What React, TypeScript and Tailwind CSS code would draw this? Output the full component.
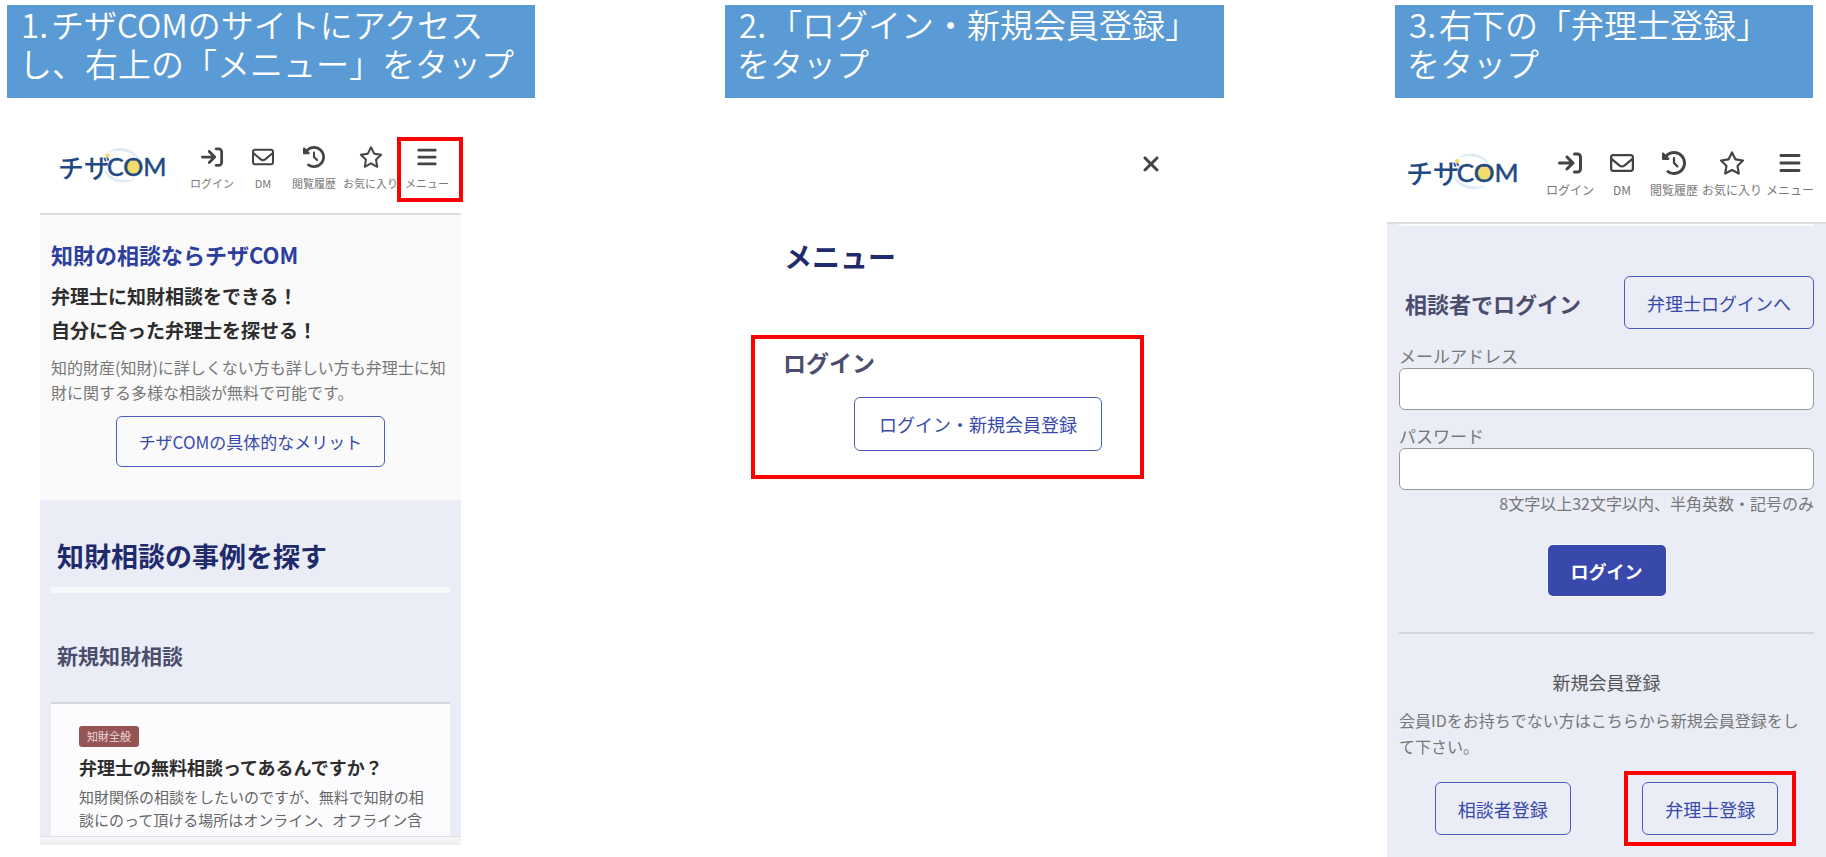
import React from "react";
import {
  FaArrowRightToBracket,
  FaBars,
  FaClockRotateLeft,
  FaRegEnvelope,
  FaRegStar,
  FaXmark,
} from "react-icons/fa6";

const navItems = [
  { title: "ログイン", icon: FaArrowRightToBracket },
  { title: "DM", icon: FaRegEnvelope },
  { title: "閲覧履歴", icon: FaClockRotateLeft },
  { title: "お気に入り", icon: FaRegStar },
  { title: "メニュー", icon: FaBars },
];

const StepTitle = ({ no, children }: { no: number; children: React.ReactNode }) => (
  <h1 className="bg-[#5b9bd5] text-white font-[350] text-[33px] leading-[39px] px-3 pb-[15px] whitespace-nowrap">
    <span className="inline-block w-8 pl-0.5">{no}.</span>
    {children}
  </h1>
);

const Logo = ({ className }: { className: string }) => (
  <svg viewBox="0 -2 108 40" className={`overflow-visible ${className}`} role="img" aria-label="チザCOM">
    {/* pale swoosh ring behind the letters */}
    <path d="M48 5 C57 -3 76 -2 81 14 C74 4 62 0 48 5 Z" fill="#dfecf8" />
    <path d="M44 19 C46 33 62 39 77 31 C64 34 50 31 44 19 Z" fill="#dfecf8" />
    <circle cx="75.500" cy="18.500" r="8.500" fill="#f2dc6b" />
    <g fill="#1f4a86">
      <text x="-1" y="30" fontSize="26" fontWeight="500" fontFamily="'Noto Sans CJK JP', sans-serif">
        チザ
      </text>
      <text x="48" y="27.500" fontSize="25" fontFamily="Lato, sans-serif" stroke="#1f4a86" strokeWidth="0.500">
        COM
      </text>
    </g>
    <circle cx="48.500" cy="7.500" r="2.200" fill="#f2dc6b" />
  </svg>
);

const SiteHeader = ({ wide, highlightMenu }: { wide?: boolean; highlightMenu?: boolean }) => (
  <header
    className={`flex justify-between items-start bg-white border-b-2 border-[#dcdcdc] pt-5 pr-3 ${
      wide ? "h-[93px] pl-5" : "h-[89px] pl-[19px]"
    }`}
  >
    <a href="#">
      <Logo className={wide ? "w-[112px] h-[42px]" : "w-[108px] h-[40px]"} />
    </a>
    <nav className={`flex ${wide ? "gap-1 text-xs" : "gap-[7px] text-[11px]"}`}>
      {navItems.map(({ title, icon: Icon }) => (
        <a
          key={title}
          href="#"
          className={`relative flex flex-col items-center gap-[7px] leading-4 whitespace-nowrap text-[#777] ${
            wide ? "min-w-12" : "min-w-11"
          }`}
        >
          <Icon
            className={`text-[#444] ${wide ? "size-6" : "size-[22px]"} ${
              Icon === FaRegStar ? "scale-110" : ""
            }`}
          />
          {title}
          {highlightMenu && title === "メニュー" && (
            <span className="absolute -top-[9px] -bottom-[11px] -left-2 -right-3.5 border-4 border-[#ff0000]" />
          )}
        </a>
      ))}
    </nav>
  </header>
);

const OutlineButton = ({ className, children }: { className: string; children: React.ReactNode }) => (
  <button
    className={`border border-[#4a5cc0] rounded-md text-[#3949ab] whitespace-nowrap cursor-pointer ${className}`}
  >
    {children}
  </button>
);

const TopScreen = () => (
  <div className="mt-7 ml-[33px] mr-[74px]">
    <SiteHeader highlightMenu />

    <section className="bg-[#fafafa] px-[11px] pt-[22px] pb-[33px]">
      <h2 className="text-[#2c3e9e] font-bold text-[22px] leading-[34px]">知財の相談ならチザCOM</h2>
      <p className="mt-2 text-[#2d2d2d] font-bold text-[19px] leading-[34px]">
        弁理士に知財相談をできる！
        <br />
        自分に合った弁理士を探せる！
      </p>
      <p className="mt-2 text-[#777] text-base leading-[25px]">
        知的財産(知財)に詳しくない方も詳しい方も弁理士に知財に関する多様な相談が無料で可能です。
      </p>
      <div className="mt-[11px] text-center">
        <OutlineButton className="h-[51px] px-[22px] text-[17px] align-top">
          チザCOMの具体的なメリット
        </OutlineButton>
      </div>
    </section>

    <section className="bg-[#eaecf6] px-[11px] pt-9">
      <h2 className="px-[6px] pb-[11px] border-b-[6px] border-[#f7f8fc] text-[#1f2b6c] font-bold text-[27px] leading-[40px]">
        知財相談の事例を探す
      </h2>
      <h3 className="mt-[46px] px-[6px] text-[#4a4d6d] font-bold text-[21px] leading-8">新規知財相談</h3>
      <article className="mt-[31px] bg-[#fcfcfe] border-t-2 border-[#d5d6dc] pl-7 pr-[26px] pt-[22px] pb-[5px]">
        <span className="block w-fit px-2 rounded-[3px] bg-[#965555] text-[#ecd9d9] text-[11px] leading-[21px]">
          知財全般
        </span>
        <h4 className="mt-[7px] text-[#2d2d2d] font-bold text-lg leading-[26px]">
          弁理士の無料相談ってあるんですか？
        </h4>
        <p className="mt-[5px] text-[#666] text-[15px] leading-[23px]">
          知財関係の相談をしたいのですが、無料で知財の相談にのって頂ける場所はオンライン、オフライン含
        </p>
      </article>
    </section>
    <div className="h-[9px] border-t border-[#dcdfe8] bg-gradient-to-b from-[#f8f8f8] to-[#ededed]" />
  </div>
);

const MenuScreen = () => (
  <div className="pt-[46px] pl-[26px] pr-20">
    <div className="flex justify-end">
      <button aria-label="閉じる" className="-mr-[27px] p-2 text-[#444] cursor-pointer">
        <FaXmark className="size-6" />
      </button>
    </div>
    <h2 className="mt-[52px] pl-[33px] text-[#1f2b6c] font-bold text-[28px] leading-10">メニュー</h2>
    <section className="mt-[59px] border-4 border-[#ff0000] pt-[7px] pb-6 pl-7 pr-[38px]">
      <h3 className="text-[#4a4d6d] font-bold text-[23px] leading-8">ログイン</h3>
      <div className="mt-[19px] flex justify-end">
        <OutlineButton className="h-[54px] px-6 text-lg">ログイン・新規会員登録</OutlineButton>
      </div>
    </section>
  </div>
);

const LoginScreen = () => (
  <div className="mt-[33px] flex flex-col grow">
    <SiteHeader wide />
    <div className="bg-[#eaecf6] px-3 grow">
      <div className="h-0.5 bg-[#fafbfd]" />
      <div className="mt-[50px] flex justify-between items-center pl-[6px]">
        <h2 className="text-[#4a4d6d] font-bold text-[22px] leading-8">相談者でログイン</h2>
        <OutlineButton className="h-[53px] px-[22px] text-lg">弁理士ログインへ</OutlineButton>
      </div>

      <form className="mt-[14px]" onSubmit={(e) => e.preventDefault()}>
        <label htmlFor="email" className="block text-[#777] text-[17px] leading-[25px]">
          メールアドレス
        </label>
        <input
          id="email"
          type="email"
          className="block w-full h-[42px] px-3 rounded-md border border-[#999] bg-white"
        />
        <label htmlFor="password" className="block mt-[13px] text-[#777] text-[17px] leading-[25px]">
          パスワード
        </label>
        <input
          id="password"
          type="password"
          className="block w-full h-[42px] px-3 rounded-md border border-[#999] bg-white"
        />
        <p className="text-right text-[#777] text-base leading-[26px]">
          8文字以上32文字以内、半角英数・記号のみ
        </p>
        <div className="mt-[29px] flex justify-center">
          <button
            type="submit"
            className="h-[51px] px-[23px] rounded-[5px] bg-[#3949ab] text-white font-bold text-lg ring-1 ring-white/60 cursor-pointer"
          >
            ログイン
          </button>
        </div>
      </form>

      <hr className="mt-9 border-t-2 border-[#d4d5da]" />

      <h3 className="mt-[34px] text-center text-[#555] text-lg leading-[28px]">新規会員登録</h3>
      <p className="mt-[11px] text-[#777] text-base leading-[26px]">
        会員IDをお持ちでない方はこちらから新規会員登録をして下さい。
      </p>
      <div className="mt-3 grid grid-cols-2 justify-items-center items-center">
        <OutlineButton className="h-[53px] px-[22px] text-lg">相談者登録</OutlineButton>
        <div className="border-4 border-[#ff0000] px-[14px] py-[7px]">
          <OutlineButton className="block h-[53px] px-[22px] text-lg">弁理士登録</OutlineButton>
        </div>
      </div>
    </div>
  </div>
);

const App = () => {
  return (
    <main className="grid grid-cols-[725fr_662fr_439fr] min-h-screen overflow-hidden bg-white font-['Noto_Sans_CJK_JP',sans-serif]">
      <div className="pt-[5px] pl-[7px] pr-[190px]">
        <StepTitle no={1}>
          チザCOMのサイトにアクセス
          <br />
          し、右上の「メニュー」をタップ
        </StepTitle>
        <TopScreen />
      </div>

      <div className="pt-[5px] pr-[163px]">
        <StepTitle no={2}>
          「ログイン・新規会員登録」
          <br />
          をタップ
        </StepTitle>
        <MenuScreen />
      </div>

      <div className="pt-[5px] flex flex-col">
        <div className="pl-2 pr-[13px]">
          <StepTitle no={3}>
            右下の「弁理士登録」
            <br />
            をタップ
          </StepTitle>
        </div>
        <LoginScreen />
      </div>
    </main>
  );
};

export default App;
